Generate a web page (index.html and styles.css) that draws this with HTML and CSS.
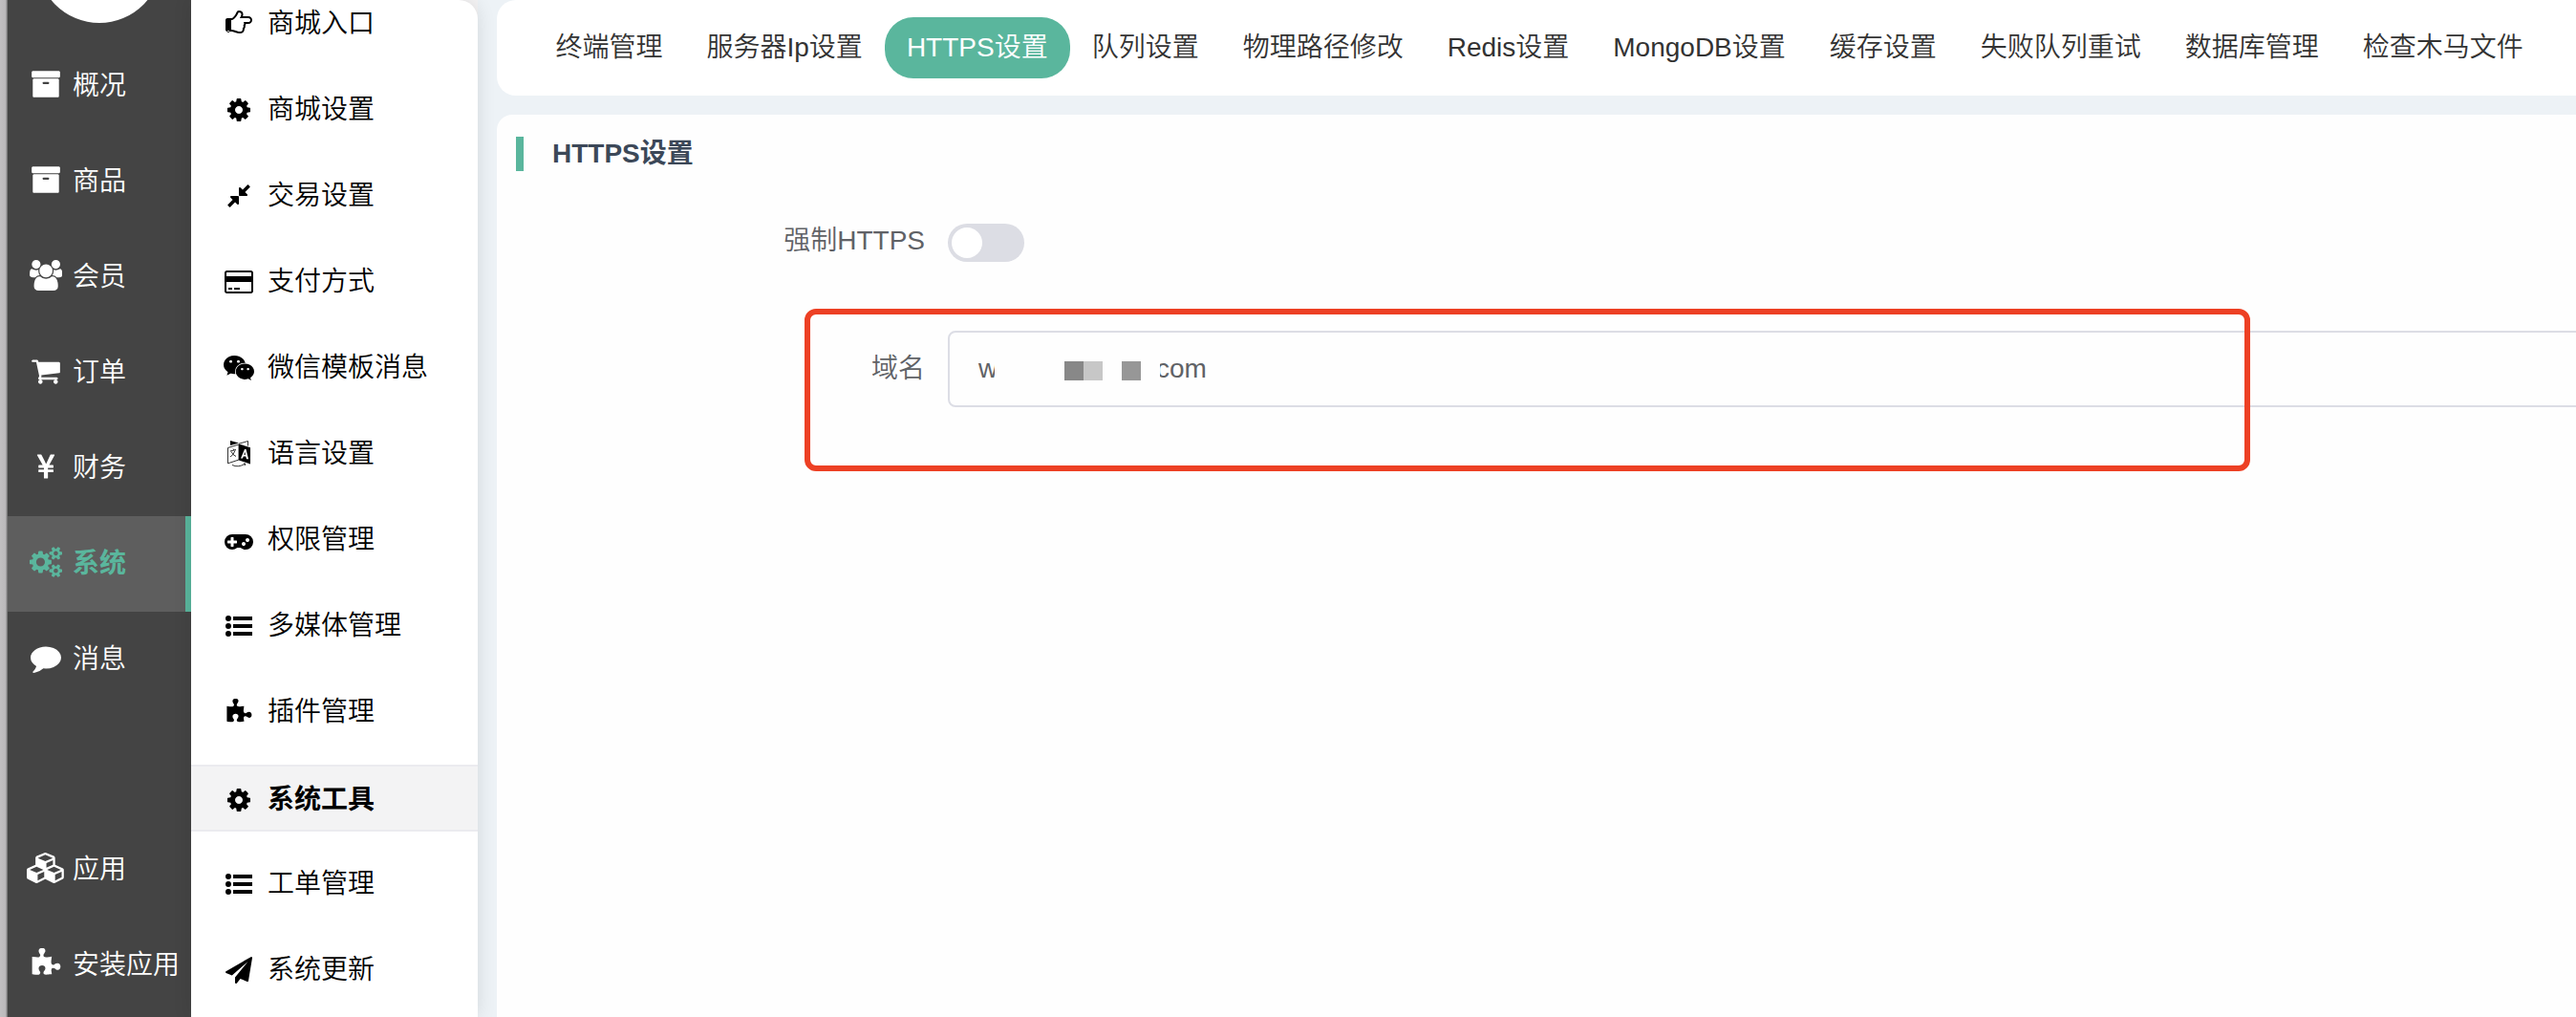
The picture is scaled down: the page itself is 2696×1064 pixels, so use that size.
FILE: index.html
```html
<!DOCTYPE html>
<html lang="zh-CN">
<head>
<meta charset="utf-8">
<title>HTTPS设置</title>
<link rel="stylesheet" href="styles.css">
</head>
<body>
<svg class="sprite" aria-hidden="true">
  <symbol id="archive" viewBox="0 0 1792 1792"><path d="M1088 832q0-26-19-45t-45-19h-256q-26 0-45 19t-19 45 19 45 45 19h256q26 0 45-19t19-45zm576-192v960q0 26-19 45t-45 19h-1408q-26 0-45-19t-19-45v-960q0-26 19-45t45-19h1408q26 0 45 19t19 45zm64-448v256q0 26-19 45t-45 19h-1536q-26 0-45-19t-19-45v-256q0-26 19-45t45-19h1536q26 0 45 19t19 45z"/></symbol>
  <symbol id="users" viewBox="0 0 1920 1792"><path d="M593 896q-162 5-265 128h-134q-82 0-138-40.500t-56-118.500q0-353 124-353 6 0 43.500 21t97.500 42.500 119 21.500q67 0 133-23-5 37-5 66 0 139 81 256zm1071 637q0 120-73 189.500t-194 69.500h-874q-121 0-194-69.500t-73-189.500q0-53 3.500-103.500t14-109 26.500-108.500 43-97.500 62-81 85.500-53.500 111.500-20q10 0 43 21.500t73 48 107 48 135 21.500 135-21.500 107-48 73-48 43-21.500q61 0 111.500 20t85.500 53.500 62 81 43 97.500 26.500 108.500 14 109 3.500 103.500zm-1024-1277q0 106-75 181t-181 75-181-75-75-181 75-181 181-75 181 75 75 181zm704 384q0 159-112.500 271.500t-271.500 112.500-271.500-112.500-112.500-271.500 112.500-271.500 271.500-112.500 271.500 112.500 112.500 271.500zm576 225q0 78-56 118.500t-138 40.500h-134q-103-123-265-128 81-117 81-256 0-29-5-66 66 23 133 23 59 0 119-21.500t97.500-42.500 43.500-21q124 0 124 353zm-128-609q0 106-75 181t-181 75-181-75-75-181 75-181 181-75 181 75 75 181z"/></symbol>
  <symbol id="cart" viewBox="0 0 1792 1792"><path d="M704 1536q0 52-38 90t-90 38-90-38-38-90 38-90 90-38 90 38 38 90zm896 0q0 52-38 90t-90 38-90-38-38-90 38-90 90-38 90 38 38 90zm128-1088v512q0 24-16.500 42.500t-40.500 21.500l-1044 122q13 60 13 70 0 16-24 64h920q26 0 45 19t19 45-19 45-45 19h-1024q-26 0-45-19t-19-45q0-11 8-31.500t16-36 21.500-40 15.500-29.500l-177-823h-204q-26 0-45-19t-19-45 19-45 45-19h256q16 0 28.500 6.500t19.500 15.500 13 24.500 8 26 5.500 29.500 4.500 26h1201q26 0 45 19t19 45z"/></symbol>
  <symbol id="yen" viewBox="0 0 1792 1792"><path d="M985.500 1600h-172q-13 0-22.500-9t-9.500-23v-330h-288q-13 0-22.500-9t-9.500-23v-103q0-13 9.500-22.500t22.500-9.500h288v-85h-288q-13 0-22.500-9t-9.500-23v-104q0-13 9.500-22.500t22.500-9.500h214l-321-578q-8-16 0-32 10-16 28-16h194q19 0 29 18l215 425q19 38 56 125 10-24 30.500-68t27.500-61l191-420q8-19 29-19h191q17 0 27 16 9 14 1 31l-313 579h215q13 0 22.500 9.500t9.500 22.500v104q0 14-9.500 23t-22.500 9h-290v85h290q13 0 22.500 9.500t9.500 22.500v103q0 14-9.500 23t-22.500 9h-290v330q0 13-9.500 22.500t-22.500 9.500z"/></symbol>
  <symbol id="cogs" viewBox="0 0 1920 1792"><path d="M896 896q0-106-75-181t-181-75-181 75-75 181 75 181 181 75 181-75 75-181zm768 512q0-52-38-90t-90-38-90 38-38 90q0 53 37.500 90.500t90.500 37.500 90.500-37.500 37.500-90.500zm0-1024q0-52-38-90t-90-38-90 38-38 90q0 53 37.500 90.500t90.500 37.500 90.500-37.500 37.500-90.500zm-384 421v185q0 10-7 19.500t-16 10.500l-155 24q-11 35-32 76 34 48 90 115 7 11 7 20 0 12-7 19-23 30-82.500 89.500t-78.500 59.500q-11 0-21-7l-115-90q-37 19-77 31-11 108-23 155-7 24-30 24h-186q-11 0-20-7.500t-10-17.500l-23-153q-34-10-75-31l-118 89q-7 7-20 7-11 0-21-8-144-133-144-160 0-9 7-19 10-14 41-53t47-61q-23-44-35-82l-152-24q-10-1-17-9.500t-7-19.500v-185q0-10 7-19.500t16-10.500l155-24q11-35 32-76-34-48-90-115-7-11-7-20 0-12 7-20 22-30 82-89t79-59q11 0 21 7l115 90q34-18 77-32 11-108 23-154 7-24 30-24h186q11 0 20 7.500t10 17.500l23 153q34 10 75 31l118-89q8-7 20-7 11 0 21 8 144 133 144 160 0 8-7 19-12 16-42 54t-45 60q23 48 34 82l152 23q10 2 17 10.500t7 19.500zm640 533v140q0 16-149 31-12 27-30 52 51 113 51 138 0 4-4 7-122 71-124 71-8 0-46-47t-52-68q-20 2-30 2t-30-2q-14 21-52 68t-46 47q-2 0-124-71-4-3-4-7 0-25 51-138-18-25-30-52-149-15-149-31v-140q0-16 149-31 13-29 30-52-51-113-51-138 0-4 4-7 4-2 35-20t59-34 30-16q8 0 46 46.500t52 67.500q20-2 30-2t30 2q51-71 92-112l6-2q4 0 124 70 4 3 4 7 0 25-51 138 17 23 30 52 149 15 149 31zm0-1024v140q0 16-149 31-12 27-30 52 51 113 51 138 0 4-4 7-122 71-124 71-8 0-46-47t-52-68q-20 2-30 2t-30-2q-14 21-52 68t-46 47q-2 0-124-71-4-3-4-7 0-25 51-138-18-25-30-52-149-15-149-31v-140q0-16 149-31 13-29 30-52-51-113-51-138 0-4 4-7 4-2 35-20t59-34 30-16q8 0 46 46.500t52 67.500q20-2 30-2t30 2q51-71 92-112l6-2q4 0 124 70 4 3 4 7 0 25-51 138 17 23 30 52 149 15 149 31z"/></symbol>
  <symbol id="comment" viewBox="0 0 1792 1792"><path d="M1792 896q0 174-120 321.500t-326 233-450 85.500q-70 0-145-8-198 175-460 242-49 14-114 22-17 2-30.500-9t-17.500-29v-1q-3-4-.5-12t2-10 4.500-9.500l6-9 7-8.500 8-9q7-8 31-34.500t34.500-38 31-39.500 32.500-51 27-59 26-76q-157-89-247.500-220t-90.500-281q0-130 71-248.500t191-204.500 286-136.500 348-50.500q244 0 450 85.500t326 233 120 321.500z"/></symbol>
  <symbol id="cubes" viewBox="0 0 2304 1792"><path d="M640 1632l384-192v-314l-384 164v342zm-64-454l404-173-404-173-404 173zm1088 454l384-192v-314l-384 164v342zm-64-454l404-173-404-173-404 173zm-448-293l384-165v-266l-384 164v267zm-64-379l441-189-441-189-441 189zm1088 518v416q0 36-19 67t-52 47l-448 224q-25 14-57 14t-57-14l-448-224q-4-2-7-4-2 2-7 4l-448 224q-25 14-57 14t-57-14l-448-224q-33-16-52-47t-19-67v-416q0-38 21.500-70t56.500-48l434-186v-400q0-38 21.500-70t56.500-48l448-192q23-10 50-10t50 10l448 192q35 16 56.500 48t21.500 70v400l434 186q36 16 57 48t21 70z"/></symbol>
  <symbol id="puzzle" viewBox="0 0 1792 1792"><path d="M1755 1083q0 81-44.500 135t-123.500 54q-41 0-77.500-17.500t-59-38-56.500-38-71-17.500q-110 0-110 124 0 39 16 115t15 115v5q-22 0-33 1-34 3-97.500 11.500t-115.500 13.500-98 5q-61 0-103-26.500t-42-83.500q0-37 17.500-71t38-56.500 38-59 17.500-77.500q0-79-54-123.500t-135-44.500q-84 0-143 45.500t-59 127.500q0 43 15 83t33.500 64.500 33.500 53 15 50.500q0 45-46 89-37 35-117 35-95 0-245-24-9-2-27.500-4t-27.500-4l-13-2q-1 0-3-1-2 0-2-1v-1024q2 1 17.500 3.500t34 5 21.500 3.500q150 24 245 24 80 0 117-35 46-44 46-89 0-22-15-50.500t-33.500-53-33.500-64.500-15-83q0-82 59-127.500t144-45.500q80 0 134 44.500t54 123.500q0 41-17.500 77.500t-38 59-38 56.500-17.500 71q0 57 42 83.500t103 26.500q64 0 180-15t163-17v2q-1 2-3.500 17.500t-5 34-3.500 21.500q-24 150-24 245 0 80 35 117 44 46 89 46 22 0 50.500-15t53-33.500 64.500-33.500 83-15q82 0 127.500 59t45.500 143z"/></symbol>
  <symbol id="hand" viewBox="0 0 1792 1792"><path d="M256 1408q0-26-19-45t-45-19-45 19-19 45 19 45 45 19 45-19 19-45zm1408-768q0-51-39-89.500t-89-38.500h-576q0-20 15-48.500t33-55 33-68 15-84.500q0-67-44.500-97.500t-115.500-30.500q-24 0-90 139-24 44-37 65-40 64-112 145-71 81-101 106-69 57-140 57h-32v640h32q72 0 167 32t193.500 64 179.500 32q189 0 189-167 0-26-5-56 30-16 47.500-52.500t17.500-73.500-18-69q53-50 53-119 0-25-10-55.500t-25-47.500h331q52 0 90-38t38-90zm128-1q0 105-75.500 181t-180.500 76h-169q-4 62-37 119 3 21 3 43 0 101-60 178 1 139-85 219.500t-227 80.500q-133 0-322-69-164-59-223-59h-288q-53 0-90.500-37.500t-37.500-90.500v-640q0-53 37.500-90.500t90.500-37.500h288q10 0 21.500-4.500t23.500-14 22.500-18 24-22.500 20.500-21.500 19-21.500 14-17q65-74 100-129 13-21 33-62t37-72 40.500-63 55-49.500 69.500-17.500q125 0 206.500 67t81.500 189q0 68-22 128h374q104 0 180 76t76 179z"/></symbol>
  <symbol id="cog" viewBox="0 0 1792 1792"><path d="M1152 896q0-106-75-181t-181-75-181 75-75 181 75 181 181 75 181-75 75-181zm512-109v222q0 12-8 23t-20 13l-185 28q-19 54-39 91 35 50 107 138 10 12 10 25t-9 23q-27 37-99 108t-94 71q-12 0-26-9l-138-108q-44 23-91 38-16 136-29 186-7 28-36 28h-222q-14 0-24.500-8.500t-11.500-21.500l-28-184q-49-16-90-37l-141 107q-10 9-25 9-14 0-25-11-126-114-165-168-7-10-7-23 0-12 8-23 15-21 51-66.500t54-70.500q-27-50-41-99l-183-27q-13-2-21-12.500t-8-23.500v-222q0-12 8-23t19-13l186-28q14-46 39-92-40-57-107-138-10-12-10-24 0-10 9-23 26-36 98.500-107.500t94.500-71.500q13 0 26 10l138 107q44-23 91-38 16-136 29-186 7-28 36-28h222q14 0 24.500 8.500t11.500 21.500l28 184q49 16 90 37l142-107q9-9 24-9 13 0 25 10 129 119 165 170 7 8 7 22 0 12-8 23-15 21-51 66.500t-54 70.500q26 50 41 98l183 28q13 2 21 12.500t8 23.500z"/></symbol>
  <symbol id="compress" viewBox="0 0 1792 1792"><path d="M896 960v448q0 26-19 45t-45 19-45-19l-144-144-332 332q-10 10-23 10t-23-10l-114-114q-10-10-10-23t10-23l332-332-144-144q-19-19-19-45t19-45 45-19h448q26 0 45 19t19 45zm755-672q0 13-10 23l-332 332 144 144q19 19 19 45t-19 45-45 19h-448q-26 0-45-19t-19-45v-448q0-26 19-45t45-19 45 19l144 144 332-332q10-10 23-10t23 10l114 114q10 10 10 23z"/></symbol>
  <symbol id="card" viewBox="0 0 1920 1792"><path d="M1760 128q66 0 113 47t47 113v1216q0 66-47 113t-113 47h-1600q-66 0-113-47t-47-113v-1216q0-66 47-113t113-47h1600zm-1600 128q-13 0-22.500 9.500t-9.500 22.500v224h1664v-224q0-13-9.500-22.500t-22.500-9.500h-1600zm1600 1280q13 0 22.500-9.500t9.500-22.500v-608h-1664v608q0 13 9.500 22.500t22.500 9.500h1600zm-1504-128v-128h256v128h-256zm384 0v-128h384v128h-384z"/></symbol>
  <symbol id="wechat" viewBox="0 0 2048 1792"><path d="M580 461q0-41-25-66t-66-25q-43 0-76 25.500t-33 65.500q0 39 33 64.500t76 25.500q41 0 66-24.500t25-65.500zm743 507q0-28-25.500-50t-65.500-22q-27 0-49.500 22.500t-22.500 49.500q0 28 22.500 50.500t49.500 22.500q40 0 65.500-22t25.500-51zm-236-507q0-41-24.500-66t-65.500-25q-43 0-76 25.500t-33 65.500q0 39 33 64.500t76 25.500q41 0 65.500-24.500t24.500-65.500zm635 507q0-28-26-50t-65-22q-27 0-49.500 22.500t-22.500 49.500q0 28 22.500 50.500t49.500 22.500q39 0 65-22t26-51zm-266-397q-31-4-70-4-169 0-311 77t-223.500 208.500-81.500 287.500q0 78 23 152-35 3-68 3-26 0-50-1.500t-55-6.500-44.500-7-54.500-10.500-50-10.500l-253 127 72-218q-290-203-290-490 0-169 97.500-311t264-223.500 363.500-81.500q176 0 332.500 66t262 182.500 134.500 260.500zm592 561q0 117-68.500 223.500t-185.500 193.500l55 181-199-109q-150 37-218 37-169 0-311-70.500t-223.500-191.500-81.500-264 81.500-264 223.500-191.500 311-70.500q161 0 303 70.500t227.500 192 85.500 263.500z"/></symbol>
  <symbol id="language" viewBox="0 0 24 28"><path d="M3 0v5l9-2.500zM12 3.500l12 3.700v17.300l-12-4zM18 9l-4 9.500h2l.7-2h2.600l.7 2.700h2L19.500 9zM18.200 11.800l.8 3h-1.700z" fill-rule="evenodd"/><path d="M12 4L.5 7.500v16.300L12 20zM12 3.200L21.500.5v5M3 11l6-1.500M6 8.500l1 1.500M8 10.500q-2 5-5 6.500M4 11.500q2 4 5 5M5 25.500q6 3 13-1M17 24l2 .2-1 2" fill="none" stroke="currentColor" stroke-width=".8"/></symbol>
  <symbol id="gamepad" viewBox="0 0 1920 1792"><path d="M832 1088v-128q0-14-9-23t-23-9h-192v-192q0-14-9-23t-23-9h-128q-14 0-23 9t-9 23v192h-192q-14 0-23 9t-9 23v128q0 14 9 23t23 9h192v192q0 14 9 23t23 9h128q14 0 23-9t9-23v-192h192q14 0 23-9t9-23zm576 64q0-53-37.500-90.500t-90.500-37.500-90.500 37.500-37.500 90.500 37.500 90.500 90.500 37.500 90.500-37.500 37.500-90.500zm256-256q0-53-37.500-90.500t-90.500-37.500-90.500 37.500-37.500 90.500 37.500 90.500 90.500 37.500 90.500-37.500 37.500-90.500zm256 128q0 212-150 362t-362 150q-192 0-338-128h-220q-146 128-338 128-212 0-362-150t-150-362 150-362 362-150h896q212 0 362 150t150 362z"/></symbol>
  <symbol id="list" viewBox="0 0 28 28"><circle cx="3" cy="6" r="3"/><circle cx="3" cy="14" r="3"/><circle cx="3" cy="22" r="3"/><path d="M8 4h20v4H8zM8 12h20v4H8zM8 20h20v4H8z"/></symbol>
  <symbol id="plane" viewBox="0 0 1792 1792"><path d="M1764 11q33 24 27 64l-256 1536q-5 29-32 45-14 8-31 8-11 0-24-5l-453-185-242 295q-18 23-49 23-13 0-22-4-19-7-30.500-23.500t-11.500-36.500v-349l864-1059-1069 925-395-162q-37-14-40-55-2-40 32-59l1664-960q15-9 32-9 20 0 36 11z"/></symbol>
</svg>

<div class="app">
  <div class="edge"></div>
  <nav class="sidebar">
    <div class="logo"></div>
    <a class="nav"><span class="nav-icon"><svg class="i32"><use href="#archive"/></svg></span>概况</a>
    <a class="nav"><span class="nav-icon"><svg class="i32"><use href="#archive"/></svg></span>商品</a>
    <a class="nav"><span class="nav-icon"><svg class="i32 wide"><use href="#users"/></svg></span>会员</a>
    <a class="nav"><span class="nav-icon"><svg class="i32"><use href="#cart"/></svg></span>订单</a>
    <a class="nav"><span class="nav-icon"><svg class="i32"><use href="#yen"/></svg></span>财务</a>
    <a class="nav active"><span class="nav-icon"><svg class="i32 wide"><use href="#cogs"/></svg></span>系统</a>
    <a class="nav"><span class="nav-icon"><svg class="i32"><use href="#comment"/></svg></span>消息</a>
    <a class="nav apps"><span class="nav-icon"><svg class="i32 xwide"><use href="#cubes"/></svg></span>应用</a>
    <a class="nav"><span class="nav-icon"><svg class="i32"><use href="#puzzle"/></svg></span>安装应用</a>
  </nav>
  <div class="submenu-wrap">
    <nav class="submenu">
      <a class="sub"><span class="sub-icon"><svg class="i28"><use href="#hand"/></svg></span>商城入口</a>
      <a class="sub"><span class="sub-icon"><svg class="i28"><use href="#cog"/></svg></span>商城设置</a>
      <a class="sub"><span class="sub-icon"><svg class="i28"><use href="#compress"/></svg></span>交易设置</a>
      <a class="sub"><span class="sub-icon"><svg class="i28 wide"><use href="#card"/></svg></span>支付方式</a>
      <a class="sub"><span class="sub-icon"><svg class="i28 xwide"><use href="#wechat"/></svg></span>微信模板消息</a>
      <a class="sub"><span class="sub-icon"><svg class="i28"><use href="#language"/></svg></span>语言设置</a>
      <a class="sub"><span class="sub-icon"><svg class="i28 wide"><use href="#gamepad"/></svg></span>权限管理</a>
      <a class="sub"><span class="sub-icon"><svg class="i28"><use href="#list"/></svg></span>多媒体管理</a>
      <a class="sub"><span class="sub-icon"><svg class="i28"><use href="#puzzle"/></svg></span>插件管理</a>
      <a class="sub active"><span class="sub-icon"><svg class="i28"><use href="#cog"/></svg></span>系统工具</a>
      <a class="sub"><span class="sub-icon"><svg class="i28"><use href="#list"/></svg></span>工单管理</a>
      <a class="sub"><span class="sub-icon"><svg class="i28"><use href="#plane"/></svg></span>系统更新</a>
    </nav>
  </div>
  <main class="main">
    <div class="tabs">
      <a class="tab">终端管理</a>
      <a class="tab">服务器Ip设置</a>
      <a class="tab active">HTTPS设置</a>
      <a class="tab">队列设置</a>
      <a class="tab">物理路径修改</a>
      <a class="tab">Redis设置</a>
      <a class="tab">MongoDB设置</a>
      <a class="tab">缓存设置</a>
      <a class="tab">失败队列重试</a>
      <a class="tab">数据库管理</a>
      <a class="tab">检查木马文件</a>
    </div>
    <section class="panel">
      <h2 class="title">HTTPS设置</h2>
      <div class="row">
        <label class="label">强制HTTPS</label>
        <span class="switch"></span>
      </div>
      <div class="row field">
        <label class="label">域名</label>
        <div class="input">
          <span class="w">w</span>
          <span class="mosaic"><i class="m1"></i><i class="m2"></i><i class="m3"></i></span>
          <span class="com">com</span>
        </div>
      </div>
      <div class="highlight"></div>
    </section>
  </main>
</div>
</body>
</html>
```
FILE: styles.css
```css
* { box-sizing: border-box; }
body {
  margin: 0;
  width: 2696px;
  height: 1064px;
  overflow: hidden;
  background: #edf2f6;
  font: 28px/40px "Liberation Sans", "Noto Sans CJK SC", sans-serif;
}
.sprite { display: none; }
svg { fill: currentColor; display: block; }
.app { display: flex; height: 1064px; overflow: hidden; }

.edge {
  width: 8px;
  flex: none;
  background: linear-gradient(90deg, #c2c0c2 0, #bab8ba 6px, #8a898a 7px, #6b6b6b 8px);
}
.sidebar {
  width: 192px;
  flex: none;
  background: #444;
  color: #fff;
  font-weight: 350;
}
.logo {
  width: 130px;
  height: 130px;
  margin: -106px 0 16px 31px;
  border-radius: 50%;
  background: #fff;
}
.nav {
  height: 100px;
  display: flex;
  align-items: center;
  padding-bottom: 1px;
  white-space: nowrap;
}
.nav-icon { width: 56px; margin: 0 0 4px 12px; display: flex; justify-content: center; flex: none; }
.nav.active {
  background: #5e5e5e;
  color: #5ab69d;
  font-weight: 700;
  border-right: 6px solid #5ab69d;
}
.nav.apps { margin-top: 120px; }
.i32 { width: 32px; height: 32px; flex: none; }
.i32.wide { width: 34.300px; }
.i32.xwide { width: 41.100px; margin-left: 2px; }

.submenu-wrap { width: 300px; flex: none; position: relative; background: #f4f3f4; }
.submenu {
  height: 1064px;
  border-radius: 0 20px 0 0;
  background: #fff;
  box-shadow: 0 0 20px rgba(0, 0, 0, .11);
  color: #000;
  font-weight: 350;
}
.sub {
  height: 90px;
  display: flex;
  align-items: center;
  white-space: nowrap;
}
.sub:first-child { height: 70px; padding-bottom: 20px; }
.sub-icon { width: 60px; margin: 0 0 0 20px; display: flex; justify-content: center; flex: none; }
.sub.active {
  height: 70px;
  margin: 10px 0;
  padding-top: 3px;
  background: #f3f3f4;
  border: solid #ebebef;
  border-width: 2px 0;
  font-weight: 700;
}
.i28 { width: 28px; height: 28px; flex: none; }
.i28.wide { width: 30px; }
.i28.xwide { width: 32px; }

.main { flex: 1; min-width: 0; padding-left: 20px; }
.tabs {
  height: 100px;
  display: flex;
  align-items: flex-start;
  padding: 18px 0 0 38.500px;
  background: #fff;
  border-radius: 20px 0 0 20px;
  color: #333;
  font-weight: 350;
}
.tab {
  height: 64px;
  line-height: 63px;
  padding: 0 23px;
  border-radius: 30px;
  white-space: nowrap;
  flex: none;
}
.tab.active { background: #5ab69d; color: #fff; }

.panel {
  position: relative;
  height: 944px;
  margin-top: 20px;
  padding-top: 23px;
  background: #fefefe;
  border-radius: 16px 0 0 0;
  overflow: hidden;
}
.title {
  margin: 0 0 0 20px;
  height: 36px;
  padding-left: 30px;
  border-left: 8px solid #5ab69d;
  font-size: 28px;
  line-height: 36px;
  color: #3c4858;
}
.row { display: flex; color: #606266; font-weight: 350; }
.row .label { width: 448px; margin-right: 24px; text-align: right; flex: none; }
.title + .row { margin-top: 53px; height: 42px; }
.switch {
  width: 80px;
  height: 40px;
  margin-top: 2px;
  padding: 4px;
  border-radius: 20px;
  background: #dcdde4;
}
.switch::before {
  content: "";
  display: block;
  width: 32px;
  height: 32px;
  border-radius: 50%;
  background: #fff;
}
.field { margin-top: 72px; }
.field .label { padding-top: 20px; }
.input {
  width: 1800px;
  height: 80px;
  flex: none;
  display: flex;
  padding: 18px 0 0 30px;
  border: 2px solid #dcdde5;
  border-radius: 8px;
}
.w { width: 21px; }
/* Redacted part of the domain, painted over its neighbouring letters */
.mosaic {
  z-index: 1;
  width: 173px;
  height: 44px;
  margin: 0 -4px;
  padding: 12px 0 0 73px;
  display: flex;
  background: #fefefe;
}
.mosaic i { width: 20px; height: 20px; }
.m1 { background: #888; }
.m2 { background: #c7c7c7; }
.m3 { background: #979797; margin-left: 20px; }
.highlight {
  position: absolute;
  left: 322px;
  top: 203px;
  width: 1513px;
  height: 170px;
  border: 6px solid #ed4024;
  border-radius: 12px;
}
```
